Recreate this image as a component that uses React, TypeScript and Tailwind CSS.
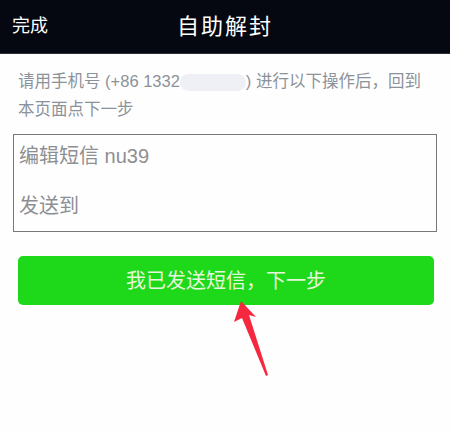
import React from 'react'

const font = { fontFamily: '"Liberation Sans", "Noto Sans CJK SC", sans-serif' }

// 红色箭头标注
const Arrow: React.FC = () => (
    <svg className="absolute left-0 top-0" width="450" height="433" viewBox="0 0 450 433">
        <polygon points="241,301 234,322 242,318 266,376 268,375 249,315 256,317" fill="#f5283f" />
    </svg>
)

const App: React.FC = () => {
    return (
        <div className="relative w-[450px] h-[433px] bg-[#fefefe] overflow-hidden" style={font}>
            <div className="h-[54px] bg-[#050810] border-b border-[#2a2e36] flex items-center relative">
                <span className="absolute left-[12px] text-[18px] text-white">完成</span>
                <span className="w-full text-center text-[22px] text-white tracking-[2px]">自助解封</span>
            </div>

            <div className="px-[18px] pt-[13px] text-[16.5px] leading-[28px] text-[#8c929a] whitespace-nowrap">
                请用手机号 (+86 1332
                <span className="inline-block align-middle w-[66px] h-[17px] rounded-full bg-[#eef0f6]" />
                ) 进行以下操作后，回到
                <br />
                本页面点下一步
            </div>

            <div className="mx-[13px] mt-[11px] h-[98px] border border-[#7a7679] px-[5px] flex flex-col text-[20px] text-[#8d8f92]">
                <div className="h-[42px] flex items-center">编辑短信 nu39</div>
                <div className="h-[50px] mt-[4px] flex items-center">发送到</div>
            </div>

            <div className="mx-[18px] mt-[24px] w-[416px] h-[49px] rounded-[5px] bg-[#1ed91a] flex items-center justify-center text-[20px] text-[#e6f6dc]">
                我已发送短信，下一步
            </div>

            <Arrow />
        </div>
    )
}

export default App
